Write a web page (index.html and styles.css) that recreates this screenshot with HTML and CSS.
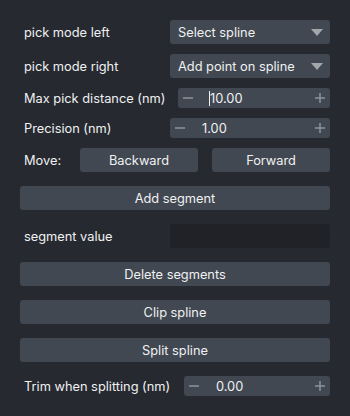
FILE: index.html
```html
<!DOCTYPE html>
<html lang="en">
<head>
    <meta charset="UTF-8">
    <meta name="viewport" content="width=device-width, initial-scale=1.0">
    <title>Spline tools</title>
    <link rel="stylesheet" href="styles.css">
</head>
<body>
    <div id="panel">
        <div class="group top">
            <div class="row">
                <span class="label">pick mode left</span>
                <div class="combo">
                    <span>Select spline</span>
                    <span class="arrow"></span>
                </div>
            </div>
            <div class="row">
                <span class="label">pick mode right</span>
                <div class="combo">
                    <span>Add point on spline</span>
                    <span class="arrow"></span>
                </div>
            </div>
            <div class="row">
                <span class="label">Max pick distance (nm)</span>
                <div class="spin w152">
                    <svg class="minus" width="10" height="10" viewBox="0 0 10 10"><path d="M0 5H10" stroke="#8d939a" stroke-width="1.5"/></svg>
                    <span class="val"><i class="cursor"></i>10.00</span>
                    <svg class="plus" width="10" height="10" viewBox="0 0 10 10"><path d="M0 5H10M5 0V10" stroke="#8d939a" stroke-width="1.5"/></svg>
                </div>
            </div>
            <div class="row">
                <span class="label">Precision (nm)</span>
                <div class="spin w160">
                    <svg class="minus" width="10" height="10" viewBox="0 0 10 10"><path d="M0 5H10" stroke="#8d939a" stroke-width="1.5"/></svg>
                    <span class="val">1.00</span>
                    <svg class="plus" width="10" height="10" viewBox="0 0 10 10"><path d="M0 5H10M5 0V10" stroke="#8d939a" stroke-width="1.5"/></svg>
                </div>
            </div>
            <div class="row move">
                <span class="label">Move:</span>
                <div class="btn back">Backward</div>
                <div class="btn fwd">Forward</div>
            </div>
        </div>
        <div class="group rest">
            <div class="btn wide">Add segment</div>
            <div class="row">
                <span class="label">segment value</span>
                <div class="field"></div>
            </div>
            <div class="btn wide">Delete segments</div>
            <div class="btn wide">Clip spline</div>
            <div class="btn wide">Split spline</div>
            <div class="row">
                <span class="label">Trim when splitting (nm)</span>
                <div class="spin w146">
                    <svg class="minus" width="10" height="10" viewBox="0 0 10 10"><path d="M0 5H10" stroke="#8d939a" stroke-width="1.5"/></svg>
                    <span class="val">0.00</span>
                    <svg class="plus" width="10" height="10" viewBox="0 0 10 10"><path d="M0 5H10M5 0V10" stroke="#8d939a" stroke-width="1.5"/></svg>
                </div>
            </div>
        </div>
    </div>
</body>
</html>
```

FILE: styles.css
```css
body{
    margin: 0;
    background: #262930;
    color: #f0f1f2;
    font-family: Inter, "Noto Sans", sans-serif;
    font-size: 12.8px;
}
#panel{
    padding: 20px 20px 0 20px;
}
.group{
    display: flex;
    flex-direction: column;
}
.top{
    gap: 10px;
}
.rest{
    margin-top: 14px;
    gap: 14px;
}
.row{
    display: flex;
    align-items: center;
}
.label{
    flex: 1;
    padding-left: 4px;
    white-space: nowrap;
}
.combo{
    width: 160px;
    height: 24px;
    background: #414851;
    border-radius: 3px;
    display: flex;
    align-items: center;
    justify-content: space-between;
    padding: 0 7px 0 8px;
    box-sizing: border-box;
}
.arrow{
    width: 0;
    height: 0;
    border-left: 6px solid transparent;
    border-right: 6px solid transparent;
    border-top: 7px solid #a3a7ac;
}
.spin{
    height: 20px;
    background: #414851;
    border-radius: 3px;
    display: flex;
    align-items: center;
    padding: 0 5px;
    box-sizing: border-box;
}
.w152{ width: 152px; }
.w160{ width: 160px; }
.w146{ width: 146px; }
.spin .val{
    flex: 1;
    padding-left: 17px;
    position: relative;
}
.cursor{
    position: absolute;
    left: 16px;
    top: 0;
    width: 1px;
    height: 15px;
    background: #f0f1f2;
}
.btn{
    height: 24px;
    background: #414851;
    border-radius: 3px;
    display: flex;
    align-items: center;
    justify-content: center;
}
.move .label{
    flex: none;
    width: 56px;
}
.move .back{
    width: 118px;
}
.move .fwd{
    width: 118px;
    margin-left: auto;
}
.field{
    width: 160px;
    height: 24px;
    background: #202228;
    border-radius: 3px;
}
```
